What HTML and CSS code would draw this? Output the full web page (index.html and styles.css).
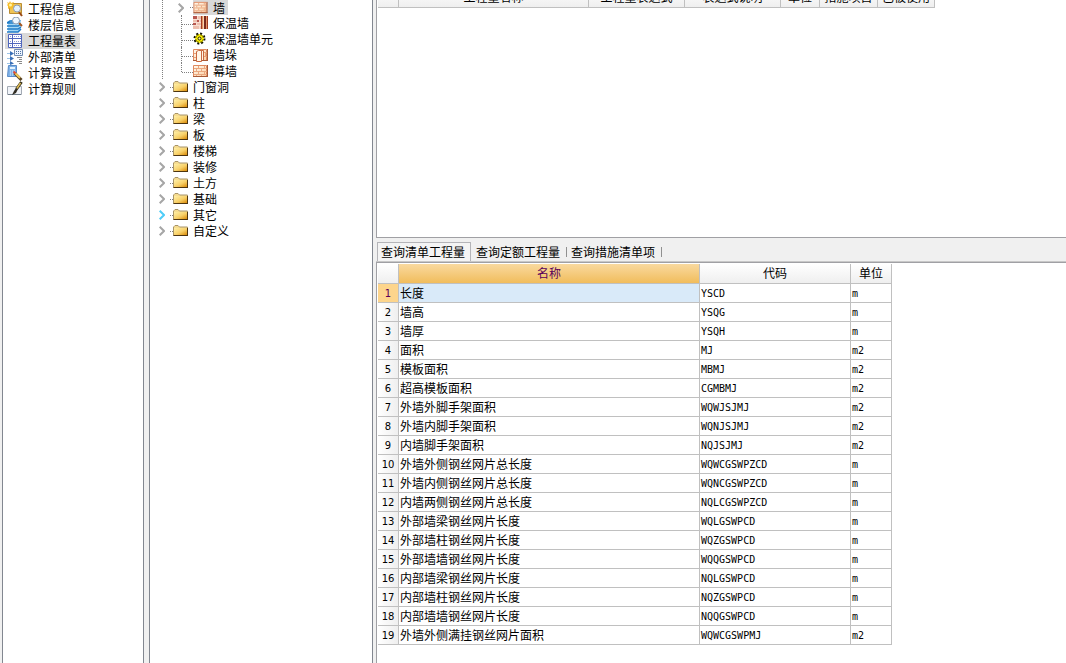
FILE: index.html
```
<!DOCTYPE html>
<html lang="zh-CN">
<head>
<meta charset="utf-8">
<title>工程量表</title>
<link rel="stylesheet" href="styles.css">
<script src="app.js" defer></script>
</head>
<body>
<svg class="defs" aria-hidden="true">
  <defs>
    <linearGradient id="gold" x1="0" y1="0" x2="1" y2="1"><stop offset="0" stop-color="#fff0a8"/><stop offset=".55" stop-color="#f8d068"/><stop offset="1" stop-color="#d98a08"/></linearGradient>
    <linearGradient id="brick" x1="0" y1="0" x2="1" y2="1"><stop offset="0" stop-color="#fffaf0"/><stop offset="1" stop-color="#fbcfa4"/></linearGradient>
    <symbol id="folder" viewBox="0 0 16 16">
      <path d="M1 3.500L2 2.500h3l1.500 1.500H14.500V12.500H.5V4z" fill="#f6dc90" stroke="#a89468"/>
      <path d="M1 5h13v7H1z" fill="url(#gold)"/>
      <path d="M.5 12.500H15M14.500 5v8" stroke="#4e3510" fill="none"/>
    </symbol>
    <symbol id="wall" viewBox="0 0 16 16">
      <path d="M.5 2.500h13v11H.5z" fill="url(#brick)" stroke="#e08a60"/>
      <path d="M1 5.500h13M1 8.500h13M1 11.500h13M5.500 3v2M11.500 3v2M3.500 6v2M8.500 6v2M5.500 9v2M11.500 9v2M3.500 12v1M8.500 12v1" stroke="#eaa880" fill="none"/>
      <path d="M14.500 2v12M0 13.500h15" stroke="#a85a38" fill="none"/>
    </symbol>
    <symbol id="insulated" viewBox="0 0 16 16">
      <path d="M0 1h8v13H0z" fill="#edbfae"/>
      <path d="M0 1h4v4H0zM0 8h3v3H0zM4 5h3v2H4z" fill="#b85850"/>
      <path d="M0 4.500h8M0 7.500h8M0 10.500h8M4.500 1v3M6.500 5v3M3.500 8v3M6.500 11v3" stroke="#f8ddd0" fill="none"/>
      <path d="M8 1h7v13H8z" fill="#e39264"/>
      <path d="M8.500 1v13M14.500 1v13" stroke="#a33b22"/><path d="M10.500 1v13" stroke="#f8d4b0"/><path d="M12 1v13" stroke="#79291d" stroke-width="2"/>
    </symbol>
    <symbol id="gear" viewBox="0 0 16 16">
      <circle cx="6.500" cy="7.500" r="5" fill="none" stroke="#111100" stroke-width="2" stroke-dasharray="2 1.927"/>
      <circle cx="6.500" cy="7.500" r="4" fill="#fff200" stroke="#6b6500"/>
      <path d="M6.500 3v9M2 7.500h9M3.500 4.500l6 6M9.500 4.500l-6 6" stroke="#fff200"/>
      <circle cx="6.500" cy="7.500" r="1.500" fill="#fff58a" stroke="#252500"/>
    </symbol>
    <symbol id="pier" viewBox="0 0 16 16">
      <path d="M.5 2.500h13v11H.5z" fill="url(#brick)" stroke="#e08a60"/>
      <path d="M1 6.500h3M1 10.500h3M10 5.500h4M10 9.500h4M12.500 6v4" stroke="#e6a27a"/>
      <path d="M3.500 4.500l2-1h3v11h-5zM8.500 3.500h2v10h-2z" fill="#fff6e8" stroke="#c9683f"/>
      <path d="M14.500 2v12M0 13.500h3M9 13.500h6" stroke="#a85a38" fill="none"/>
    </symbol>
    <symbol id="info" viewBox="0 0 16 16">
      <path d="M2.500 2.500h12v10h-12z" fill="#efc456" stroke="#b98d35"/>
      <path d="M0 1l2 1 1-2 1 2 3-1-1 2 2 1-2 1 1 3-2-1-1 2-1-2-2 1v-3l-1-1 1-1z" fill="#f6bd2d"/><circle cx="3.500" cy="4" r="1.500" fill="#fff5a4"/>
      <path d="M12 11l3 4" stroke="#9a4b16" stroke-width="2"/><circle cx="10" cy="7.500" r="3.500" fill="#e3f1fc" stroke="#8c9bb0"/>
    </symbol>
    <symbol id="floors" viewBox="0 0 16 16">
      <path d="M1 5l3-2h10v9l-3 3H1z" fill="#a4d8f5"/>
      <path d="M0 6l3-2h9l-2 2zM0 9h11l3-2M0 12h11l3-2M0 15h11l3-3" fill="none" stroke="#1f7cc8" stroke-width="1.500"/>
      <path d="M12 6l3 3" stroke="#a45822" stroke-width="2"/><circle cx="9" cy="3.500" r="3.500" fill="#edf7ff" stroke="#8e9fb5"/>
    </symbol>
    <symbol id="sheet" viewBox="0 0 16 16">
      <path d="M1.500 1.500h13v13h-13z" fill="#fff" stroke="#4f66bd"/>
      <path d="M5.500 1v14M1 5.500h14M1 10.500h14" stroke="#4f66bd"/>
      <path d="M7 3.500h7M7 8.500h7M7 12.500h7M3 3.500h1M3 8.500h1M3 12.500h1" stroke="#8998d3" stroke-dasharray="1 1"/>
    </symbol>
    <symbol id="external" viewBox="0 0 16 16">
      <path d="M7.500.5h8v6h-8z" fill="#eef5ff" stroke="#718db3"/><path d="M9 2.500h6M9 4.500h6" stroke="#4d70a0" stroke-dasharray="1 1"/>
      <path d="M0 4.500h4M0 9.500h4M0 14.500h4" stroke="#9cc4e8"/><path d="M3 2l4 2.500L3 7zM3 7l4 2.500L3 12zM3 12l4 2.500L3 16z" fill="#3a70b8"/>
      <path d="M10 8.500h5M12 10.500h3M10 12.500h5M12 14.500h3" stroke="#8a8a8a"/>
    </symbol>
    <symbol id="settings" viewBox="0 0 16 16">
      <path d="M1.500.5h8v11h-9z" fill="#7fb2e8" stroke="#5a8cc8"/><path d="M3 2h5v2H3z" fill="#e6f4ff"/>
      <path d="M3 6h5M3 8h5M3 10h4" stroke="#d8edff" stroke-dasharray="1 1"/>
      <path d="M7.500 8l7 7" stroke="#594322" stroke-width="3"/><path d="M8 8l5 5" stroke="#f2c85a" stroke-width="2"/><path d="M6.500 6.500l2 2" stroke="#e24c36" stroke-width="2"/>
    </symbol>
    <symbol id="rules" viewBox="0 0 16 16">
      <path d="M.5 5.500h14v8H.5z" fill="#f0f3f8" stroke="#a4abb5"/><path d="M1 13.500h13" stroke="#73808c"/>
      <path d="M14.500 1l-5 7" stroke="#34301b" stroke-width="3"/><path d="M13.500 2L9.500 8" stroke="#e0bc58" stroke-width="1.500"/><path d="M9 7l2 1-2 4-4 2 2-4z" fill="#302c22"/>
    </symbol>
    <symbol id="chevron" viewBox="0 0 6 10"><path d="M.7.700L5 5 .7 9.300" fill="none" stroke="currentColor" stroke-width="2"/></symbol>
  </defs>
</svg>
<div class="app">
  <nav class="nav" aria-label="模块">
    <button class="nav-item"><svg class="icon"><use href="#info"/></svg><span>工程信息</span></button>
    <button class="nav-item"><svg class="icon"><use href="#floors"/></svg><span>楼层信息</span></button>
    <button class="nav-item selected"><svg class="icon"><use href="#sheet"/></svg><span>工程量表</span></button>
    <button class="nav-item"><svg class="icon"><use href="#external"/></svg><span>外部清单</span></button>
    <button class="nav-item"><svg class="icon"><use href="#settings"/></svg><span>计算设置</span></button>
    <button class="nav-item"><svg class="icon"><use href="#rules"/></svg><span>计算规则</span></button>
  </nav>
  <aside class="tree" aria-label="构件类型">
    <div class="branch"><div class="children" id="children"></div></div>
    <div id="folders"></div>
  </aside>
  <main class="main">
    <section class="upper">
      <div class="header-clip">
        <table class="grid upper-grid">
          <colgroup><col class="w-num"><col class="w-title"><col class="w-expr"><col class="w-expr"><col class="w-unit-s"><col class="w-item"><col class="w-used"></colgroup>
          <thead><tr><th></th><th>工程量名称</th><th>工程量表达式</th><th>表达式说明</th><th>单位</th><th>措施项目</th><th>已被使用</th></tr></thead>
        </table>
      </div>
    </section>
    <div class="tabs" role="tablist">
      <button class="tab active" role="tab" aria-selected="true">查询清单工程量</button>
      <button class="tab" role="tab" aria-selected="false">查询定额工程量</button>
      <button class="tab" role="tab" aria-selected="false">查询措施清单项</button>
    </div>
    <section class="lower">
      <table class="grid lower-grid">
        <colgroup><col class="w-num"><col class="w-name"><col class="w-code"><col class="w-unit"></colgroup>
        <thead><tr><th></th><th class="sorted">名称</th><th>代码</th><th>单位</th></tr></thead>
        <tbody id="rows"></tbody>
      </table>
    </section>
  </main>
</div>
</body>
</html>
```

FILE: styles.css
```
* { box-sizing: border-box; }
body {
  margin: 0;
  background: #f0f0f0;
  color: #000;
  font: 12px/16px "Noto Sans CJK SC", sans-serif;
}
button {
  margin: 0;
  padding: 0;
  border: 0;
  background: none;
  color: inherit;
  font: inherit;
  white-space: nowrap;
}
.defs { position: absolute; width: 0; height: 0; }
.icon { display: block; flex: none; width: 16px; height: 16px; }
.app { display: flex; height: 100vh; padding-left: 2px; overflow: hidden; }

.nav, .tree {
  flex: none;
  overflow: hidden;
  background: #fff;
  border: solid #828790;
  border-width: 0 1px;
}
.nav { width: 142px; margin-right: 5px; padding: 1px 0 0 2px; }
.nav-item { display: flex; width: 75px; padding-left: 2px; gap: 5px; }
.nav-item.selected { background: #d9d9d9; }

.tree { width: 224px; margin-right: 3px; }
.branch { margin-left: 12px; border-left: 1px dotted #808080; }
.children { margin-left: 15px; }
.child { display: flex; align-items: center; height: 16px; }
.child:first-child { height: 15px; line-height: 15px; }
.child:first-child .icon { height: 15px; }
.child .stem { flex: none; width: 12px; height: 16px; margin-left: 3px; border-left: 1px dotted #808080; }
.child .stem::after { content: ""; display: block; height: 9px; border-bottom: 1px dotted #808080; }
.child:last-child .stem { height: 9px; align-self: flex-start; }
.child .chevron { margin-right: 6px; }
.child .dots { width: 3px; }
.label { display: flex; gap: 4px; padding-right: 3px; line-height: inherit; }
.label.selected { background: #d9d9d9; }
.chevron { display: block; flex: none; width: 6px; height: 10px; color: #a6a6a6; }
.chevron svg { display: block; width: 6px; height: 10px; }
.chevron.hot { color: #4fcdf8; }
.dots { flex: none; width: 3px; border-top: 1px dotted #808080; }
.folder-row { display: flex; align-items: center; height: 16px; padding-left: 9px; }
.folder-row .chevron { margin-right: 5px; }
.folder-row .label { gap: 4px; }

.main { display: flex; flex: 1; flex-direction: column; min-width: 0; }
.upper {
  flex: none;
  height: 238px;
  padding-left: 1px;
  background: #fff;
  border: solid #a0a0a4;
  border-width: 0 0 1px 1px;
}
.header-clip { display: flex; align-items: flex-end; height: 8px; overflow: hidden; }

.grid { table-layout: fixed; border-spacing: 0; }
.grid th, .grid td {
  height: 19px;
  padding: 0 1px;
  overflow: hidden;
  border: solid #c0c0c0;
  border-width: 0 1px 1px 0;
  line-height: 16px;
  white-space: nowrap;
  text-align: left;
  font-weight: 400;
}
.grid thead th {
  height: 20px;
  padding-bottom: 2px;
  background: linear-gradient(#fff, #efefef);
  text-align: center;
}
.upper-grid { flex: none; width: 557px; }
.lower-grid { width: 514px; }
.w-num { width: 21px; }
.w-title { width: 190px; }
.w-expr { width: 96px; }
.w-unit-s { width: 39px; }
.w-item { width: 58px; }
.w-used { width: 57px; }
.w-name { width: 301px; }
.w-code { width: 151px; }
.w-unit { width: 41px; }

.tabs { display: flex; flex: none; height: 24px; padding: 4px 0 0 1px; border-bottom: 1px solid #c8c8c8; }
.tab { position: relative; padding: 1px 6px 0 5px; }
.tab.active {
  padding: 0 5px 0 3px;
  background: #f4f4f4;
  border: solid #b4b4b8;
  border-width: 1px 1px 0;
}
.tab:not(.active)::after { content: ""; position: absolute; top: 5px; right: -1px; height: 10px; border-right: 1px solid #909090; }

.lower { flex: 1; padding: 1px 0 0 1px; background: #fff; border: solid #a0a0a4; border-width: 1px 0 0 1px; }
.grid thead .sorted { background: linear-gradient(#f9d99f, #f1bd5c); color: #5a005a; }
.grid tbody th {
  background: linear-gradient(90deg, #fff, #efefef);
  padding: 2px 0 0;
  text-align: center;
  font: 10px/16px "DejaVu Sans", sans-serif;
}
.grid tbody .current { background: #fdd58c; color: #5a005a; }
.grid .current-name { background: #d9eaf9; }
.code { font: 10px/16px "DejaVu Sans Mono", monospace; }
```

FILE: app.js
```
const icon = id => `<svg class="icon"><use href="#${id}"/></svg>`;
const chevron = (name, hot) => `<button class="chevron${hot ? " hot" : ""}" aria-label="展开${name}"><svg><use href="#chevron"/></svg></button>`;

const children = [["wall", "墙"], ["insulated", "保温墙"], ["gear", "保温墙单元"], ["pier", "墙垛"], ["wall", "幕墙"]];
document.getElementById("children").innerHTML = children.map(([id, name], i) =>
  `<div class="child">${i ? '<span class="stem"></span>' : chevron(name) + '<span class="dots"></span>'}<button class="label${i ? "" : " selected"}">${icon(id)}<span>${name}</span></button></div>`).join("");

const folders = ["门窗洞", "柱", "梁", "板", "楼梯", "装修", "土方", "基础", "其它", "自定义"];
document.getElementById("folders").innerHTML = folders.map(name =>
  `<div class="folder-row">${chevron(name, name === "其它")}<span class="dots"></span><button class="label">${icon("folder")}<span>${name}</span></button></div>`).join("");

const rows = [
  ["长度", "YSCD", "m"], ["墙高", "YSQG", "m"], ["墙厚", "YSQH", "m"], ["面积", "MJ", "m2"],
  ["模板面积", "MBMJ", "m2"], ["超高模板面积", "CGMBMJ", "m2"], ["外墙外脚手架面积", "WQWJSJMJ", "m2"],
  ["外墙内脚手架面积", "WQNJSJMJ", "m2"], ["内墙脚手架面积", "NQJSJMJ", "m2"],
  ["外墙外侧钢丝网片总长度", "WQWCGSWPZCD", "m"], ["外墙内侧钢丝网片总长度", "WQNCGSWPZCD", "m"],
  ["内墙两侧钢丝网片总长度", "NQLCGSWPZCD", "m"], ["外部墙梁钢丝网片长度", "WQLGSWPCD", "m"],
  ["外部墙柱钢丝网片长度", "WQZGSWPCD", "m"], ["外部墙墙钢丝网片长度", "WQQGSWPCD", "m"],
  ["内部墙梁钢丝网片长度", "NQLGSWPCD", "m"], ["内部墙柱钢丝网片长度", "NQZGSWPCD", "m"],
  ["内部墙墙钢丝网片长度", "NQQGSWPCD", "m"], ["外墙外侧满挂钢丝网片面积", "WQWCGSWPMJ", "m2"]
];
document.getElementById("rows").innerHTML = rows.map(([name, code, unit], i) =>
  `<tr><th scope="row"${i ? "" : ' class="current"'}>${i + 1}</th><td${i ? "" : ' class="current-name"'}>${name}</td><td><span class="code">${code}</span></td><td><span class="code">${unit}</span></td></tr>`).join("");
```
